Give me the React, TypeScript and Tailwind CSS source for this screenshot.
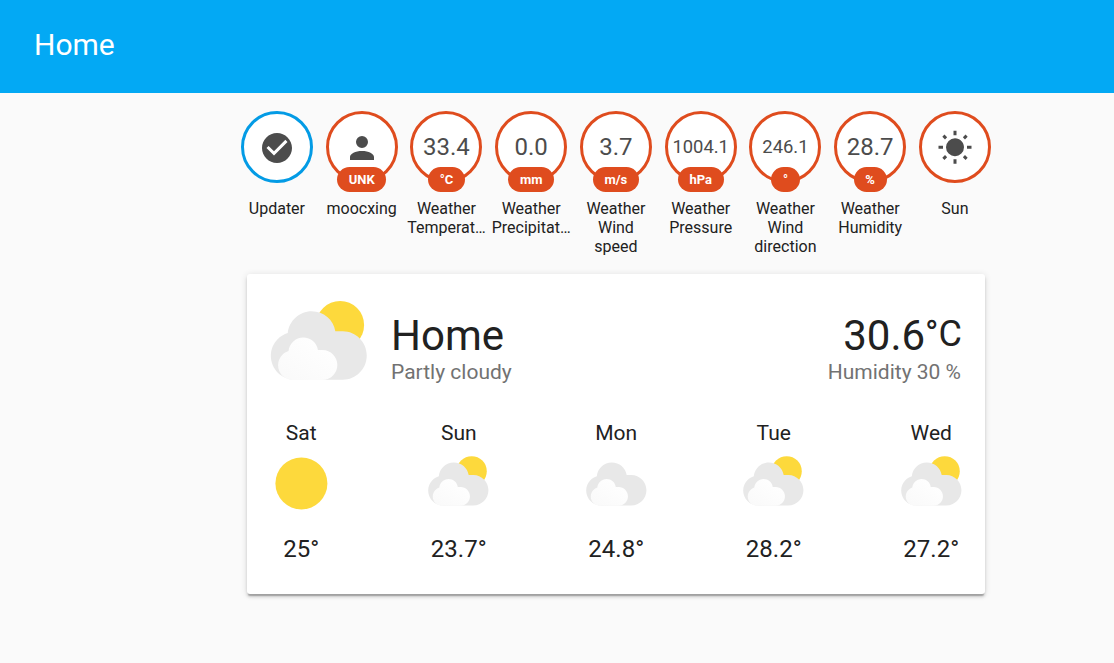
import React from "react";

type Condition = "sunny" | "partly" | "cloudy";

function WeatherIcon({ condition, className }: { condition: Condition; className: string }) {
  return (
    <svg viewBox="0 0 17 17" className={className}>
      <defs>
        <linearGradient id="front" x1="0" y1="1" x2="0.7" y2="0.2">
          <stop offset="0" stopColor="#f9f9f9" />
          <stop offset="1" stopColor="#fefefe" />
        </linearGradient>
      </defs>
      {condition === "sunny" && <circle cx="8.4" cy="8.4" r="5.996" fill="#fdd93c" />}
      {condition === "partly" && <circle cx="11.497" cy="4.211" r="3.484" fill="#fdd93c" />}
      {condition !== "sunny" && (
        <>
          <path
            transform="translate(0 .34)"
            fill="#e8e8e8"
            d="m3.8863 5.035c-0.54892 0.16898-1.04 0.46637-1.4372 0.8636-0.63077 0.63041-1.0206 1.4933-1.0206 2.455 0 1.9251 1.5589 3.4682 3.4837 3.4682h6.9688c1.9251 0 3.484-1.5981 3.484-3.5232 0-1.9251-1.5589-3.5232-3.484-3.5232h-1.0834c-0.25294-1.6916-1.6986-2.9083-3.4463-2.9083-1.7995 0-3.2805 1.4153-3.465 3.1679"
          />
          <path
            transform="translate(-.2 .3)"
            fill="url(#front)"
            d="m4.1996 7.6995c-0.33902 0.10407-0.64276 0.28787-0.88794 0.5334-0.39017 0.38982-0.63147 0.92322-0.63147 1.5176 0 1.1896 0.96414 2.1431 2.1537 2.1431h4.3071c1.1896 0 2.153-0.98742 2.153-2.1777 0-1.1896-0.96344-2.1777-2.153-2.1777h-0.66992c-0.15593-1.0449-1.0499-1.7974-2.1297-1.7974-1.112 0-2.0274 0.87524-2.1417 1.9586"
          />
        </>
      )}
    </svg>
  );
}

const icons = {
  check:
    "M12 2C6.5 2 2 6.5 2 12S6.5 22 12 22 22 17.5 22 12 17.5 2 12 2M10 17L5 12L6.41 10.59L10 14.17L17.59 6.58L19 8L10 17Z",
  account:
    "M12,4A4,4 0 0,1 16,8A4,4 0 0,1 12,12A4,4 0 0,1 8,8A4,4 0 0,1 12,4M12,14C16.42,14 20,15.79 20,18V20H4V18C4,15.79 7.58,14 12,14Z",
  sun: "M3.55,18.54L4.96,19.95L6.76,18.16L5.34,16.74M11,22.45C11.32,22.45 13,22.45 13,22.45V19.5H11M12,5.5A6,6 0 0,0 6,11.5A6,6 0 0,0 12,17.5A6,6 0 0,0 18,11.5C18,8.18 15.31,5.5 12,5.5M20,12.5H23V10.5H20M17.24,18.16L19.04,19.95L20.45,18.54L18.66,16.74M20.45,4.46L19.04,3.05L17.24,4.84L18.66,6.26M13,0.55H11V3.5H13M4,10.5H1V12.5H4M6.76,4.84L4.96,3.05L3.55,4.46L5.34,6.26L6.76,4.84Z",
};

interface BadgeData {
  name: string;
  icon?: keyof typeof icons;
  value?: string;
  unit?: string;
  blue?: boolean;
}

const badges: BadgeData[] = [
  { name: "Updater", icon: "check", blue: true },
  { name: "moocxing", icon: "account", unit: "UNK" },
  { name: "Weather Temperat…", value: "33.4", unit: "°C" },
  { name: "Weather Precipitat…", value: "0.0", unit: "mm" },
  { name: "Weather Wind speed", value: "3.7", unit: "m/s" },
  { name: "Weather Pressure", value: "1004.1", unit: "hPa" },
  { name: "Weather Wind direction", value: "246.1", unit: "°" },
  { name: "Weather Humidity", value: "28.7", unit: "%" },
  { name: "Sun", icon: "sun" },
];

function Badge({ name, icon, value = "", unit, blue }: BadgeData) {
  return (
    <div className="flex w-[84.75px] flex-col items-center">
      <div
        className={`relative flex h-[72px] w-[72px] items-center justify-center rounded-full border-[3px] bg-white text-[#4c4c4c] ${blue ? "border-[#039be5]" : "border-[#df4c1e]"}`}
      >
        {icon ? (
          <svg viewBox="0 0 24 24" className="mt-[2px] h-9 w-9 fill-current">
            <path d={icons[icon]} />
          </svg>
        ) : (
          <span className={value.length > 4 ? "text-[18.4px]" : "text-[24px]"}>{value}</span>
        )}
        {unit && (
          <span className="absolute top-[53px] flex h-[25px] items-center rounded-[12.5px] bg-[#df4c1e] px-[11.6px] text-[13px] font-bold text-white">
            {unit}
          </span>
        )}
      </div>
      <div className="mt-4 w-[80px] text-center text-[16px] leading-[19px] text-[#212121]">
        {name}
      </div>
    </div>
  );
}

const forecast: { day: string; condition: Condition; temp: string }[] = [
  { day: "Sat", condition: "sunny", temp: "25°" },
  { day: "Sun", condition: "partly", temp: "23.7°" },
  { day: "Mon", condition: "cloudy", temp: "24.8°" },
  { day: "Tue", condition: "partly", temp: "28.2°" },
  { day: "Wed", condition: "partly", temp: "27.2°" },
];

export default function App() {
  return (
    <div className="h-[663px] w-[1114px] overflow-hidden bg-[#fafafa] font-['Roboto',sans-serif] text-[#212121]">
      <header className="flex h-[93px] items-center bg-[#03a9f4] pb-1 pl-[34px] text-[30px] text-white">
        Home
      </header>
      <div className="flex h-[181px] pt-[18px] pl-[234.55px]">
        {badges.map((b) => (
          <Badge key={b.name} {...b} />
        ))}
      </div>
      <main className="ml-[247px] h-[320px] w-[738px] rounded-[3px] bg-white px-6 pt-[21px] shadow-[0_3px_3px_0_rgba(0,0,0,0.14),0_1px_7px_0_rgba(0,0,0,0.12),0_3px_1px_-1px_rgba(0,0,0,0.2)]">
        <div className="flex h-[118px]">
          <WeatherIcon condition="partly" className="mt-[1px] -ml-[10px] h-[117px] w-[117px] shrink-0" />
          <div className="ml-[13px] flex-1 pt-[17px]">
            <div className="text-[42px] leading-[48px]">Home</div>
            <div className="text-[21px] leading-[24px] text-[#727272]">Partly cloudy</div>
          </div>
          <div className="pt-[17px] text-right">
            <div className="-mr-[1px] flex justify-end text-[42px] leading-[48px]">
              30.6<span className="-mt-[2px] text-[36px] leading-[48px]">°C</span>
            </div>
            <div className="text-[21px] leading-[24px] text-[#727272]">Humidity 30 %</div>
          </div>
        </div>
        <div className="flex justify-between pt-[8px]">
          {forecast.map((f) => (
            <div key={f.day} className="flex w-[60px] flex-col items-center">
              <div className="ml-[0.5px] text-[21px] leading-[24px]">{f.day}</div>
              <div className="flex h-[90px] w-[74px] shrink-0 flex-col items-center">
                <WeatherIcon
                  condition={f.condition}
                  className={
                    f.condition === "sunny"
                      ? "mt-[2px] ml-[1px] h-[73.7px] w-[73.7px] shrink-0"
                      : "mt-[7.5px] ml-[1px] h-[73.5px] w-[73.5px] shrink-0"
                  }
                />
              </div>
              <div className="ml-[0.5px] text-[24px] leading-[28px]">{f.temp}</div>
            </div>
          ))}
        </div>
      </main>
    </div>
  );
}
